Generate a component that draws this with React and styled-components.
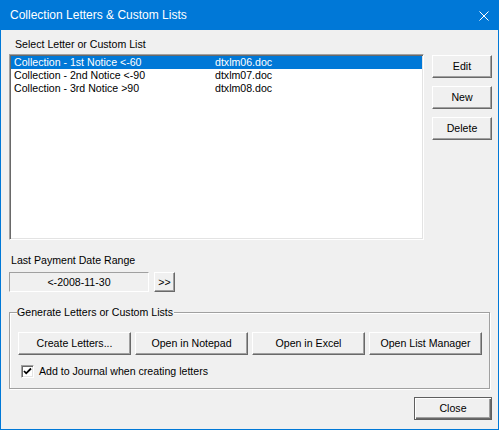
import React from "react";
import styled, { createGlobalStyle } from "styled-components";

const Global = createGlobalStyle`
  html, body { margin: 0; padding: 0; background: #f0f0f0; }
  body { font-family: "Liberation Sans", Arial, sans-serif; font-size: 10.6px; color: #000; }
  * { box-sizing: border-box; }
`;

const Window = styled.div`
  width: 499px;
  height: 430px;
  border: 1px solid #0078d7;
  background: #f0f0f0;
  display: flex;
  flex-direction: column;
  overflow: hidden;
`;

const TitleBar = styled.div`
  height: 29px;
  background: #0078d7;
  color: #fff;
  display: flex;
  align-items: center;
  justify-content: space-between;
  padding: 0 9px 1px 9px;
  font-family: "Liberation Sans", Arial, sans-serif;
  font-size: 12px;
`;

const TitleText = styled.span`
  line-height: 16px;
`;

const CloseIcon = styled.svg`
  display: block;
  width: 10px;
  height: 10px;
  margin-top: 1px;
`;

const Body = styled.div`
  flex: 1;
  padding: 8px 6px 0 8px;
  display: flex;
  flex-direction: column;
`;

const Label = styled.div`
  height: 13px;
  line-height: 13px;
  white-space: nowrap;
  margin-top: ${(p) => p.$mt || 0}px;
  padding-left: ${(p) => p.$pl || 0}px;
`;

const TopRow = styled.div`
  display: flex;
  gap: 8px;
  margin-top: 3px;
`;

const ListBox = styled.div`
  width: 415px;
  height: 186px;
  background: #fff;
  border: 1px solid;
  border-color: #a0a0a0 #fff #fff #a0a0a0;
  box-shadow: inset 1px 1px #696969, inset -1px -1px #e3e3e3;
  padding: 1px;
  display: flex;
  flex-direction: column;
`;

const ListRow = styled.div`
  height: 13px;
  line-height: 13px;
  display: flex;
  padding-left: 3px;
  white-space: nowrap;
  background: ${(p) => (p.$selected ? "#0078d7" : "transparent")};
  color: ${(p) => (p.$selected ? "#fff" : "#000")};
`;

const NameCell = styled.span`
  width: 201px;
  flex: none;
`;

const FileCell = styled.span``;

const ButtonCol = styled.div`
  display: flex;
  flex-direction: column;
  gap: 8px;
  padding-top: 1px;
`;

const Button = styled.button`
  width: ${(p) => p.$w}px;
  height: ${(p) => p.$h || 23}px;
  padding: 0;
  margin: 0;
  background: #f0f0f0;
  font-family: "Liberation Sans", Arial, sans-serif;
  font-size: 10.6px;
  color: #000;
  border: 1px solid;
  border-color: #fff #696969 #696969 #fff;
  box-shadow: inset -1px -1px #a0a0a0, inset 1px 1px #f0f0f0;
  display: flex;
  align-items: center;
  justify-content: center;
  line-height: 13px;
  white-space: nowrap;
  flex: none;
  outline: none;
`;

const DefaultButton = styled(Button)`
  border: 1px solid #5f5f5f;
  box-shadow: inset 1px 1px #fff, inset -1px -1px #696969, inset -2px -2px #a0a0a0;
`;

const DateRow = styled.div`
  display: flex;
  gap: 5px;
  margin-top: 5px;
`;

const DateField = styled.div`
  width: 140px;
  height: 20px;
  border: 1px solid;
  border-color: #a0a0a0 #fff #fff #a0a0a0;
  display: flex;
  align-items: center;
  justify-content: center;
  line-height: 13px;
`;

const Group = styled.div`
  position: relative;
  margin-top: 20px;
  width: 481px;
  height: 77px;
  border: 1px solid #a0a0a0;
  box-shadow: inset 1px 1px #fff, 1px 1px #fff;
  padding: 19px 7px 0 8px;
  display: flex;
  flex-direction: column;
`;

const GroupLabel = styled.span`
  position: absolute;
  left: 7px;
  top: -7px;
  padding: 0 1px 0 0;
  height: 13px;
  line-height: 13px;
  background: #f0f0f0;
  white-space: nowrap;
`;

const ButtonRow = styled.div`
  display: flex;
  gap: 4px;
`;

const CheckRow = styled.label`
  display: flex;
  align-items: center;
  gap: 5px;
  margin-top: 10px;
  margin-left: 3px;
  height: 13px;
  line-height: 13px;
`;

const CheckBox = styled.span`
  width: 13px;
  height: 13px;
  flex: none;
  background: #fff;
  border: 1px solid;
  border-color: #a0a0a0 #fff #fff #a0a0a0;
  box-shadow: inset 1px 1px #696969, inset -1px -1px #e3e3e3;
  display: flex;
  align-items: center;
  justify-content: center;
`;

const Footer = styled.div`
  display: flex;
  justify-content: flex-end;
  margin-top: 8px;
`;

const rows = [
  { name: "Collection - 1st Notice <-60", file: "dtxlm06.doc", selected: true },
  { name: "Collection - 2nd Notice <-90", file: "dtxlm07.doc" },
  { name: "Collection - 3rd Notice >90", file: "dtxlm08.doc" },
];

export default function App() {
  return (
    <>
      <Global />
      <Window>
        <TitleBar>
          <TitleText>Collection Letters &amp; Custom Lists</TitleText>
          <CloseIcon viewBox="0 0 10 10">
            <path d="M0.5 0.5 L9.5 9.5 M9.5 0.5 L0.5 9.5" stroke="#fff" strokeWidth="1" fill="none" />
          </CloseIcon>
        </TitleBar>
        <Body>
          <Label $pl={6}>Select Letter or Custom List</Label>
          <TopRow>
            <ListBox>
              {rows.map((r) => (
                <ListRow key={r.file} $selected={r.selected}>
                  <NameCell>{r.name}</NameCell>
                  <FileCell>{r.file}</FileCell>
                </ListRow>
              ))}
            </ListBox>
            <ButtonCol>
              <Button $w={60}>Edit</Button>
              <Button $w={60}>New</Button>
              <Button $w={60}>Delete</Button>
            </ButtonCol>
          </TopRow>
          <Label $mt={14} $pl={2}>Last Payment Date Range</Label>
          <DateRow>
            <DateField>&lt;-2008-11-30</DateField>
            <Button $w={21} $h={20}>&gt;&gt;</Button>
          </DateRow>
          <Group>
            <GroupLabel>Generate Letters or Custom Lists</GroupLabel>
            <ButtonRow>
              <Button $w={113}>Create Letters...</Button>
              <Button $w={113}>Open in Notepad</Button>
              <Button $w={113}>Open in Excel</Button>
              <Button $w={113}>Open List Manager</Button>
            </ButtonRow>
            <CheckRow>
              <CheckBox>
                <svg width="9" height="9" viewBox="0 0 9 9">
                  <path d="M1 4 L3.2 6.3 L8 1.5" stroke="#000" strokeWidth="1.8" fill="none" />
                </svg>
              </CheckBox>
              <span>Add to Journal when creating letters</span>
            </CheckRow>
          </Group>
          <Footer>
            <DefaultButton $w={78}>Close</DefaultButton>
          </Footer>
        </Body>
      </Window>
    </>
  );
}
